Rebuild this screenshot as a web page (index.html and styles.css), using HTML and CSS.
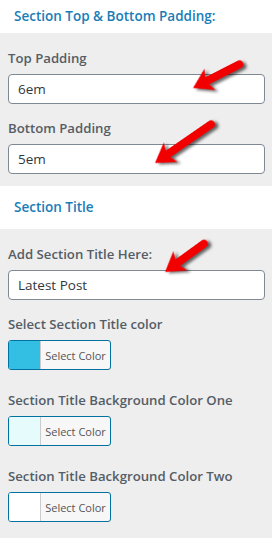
FILE: index.html
```html
<!DOCTYPE html>
<html lang="en">
<head>
  <meta charset="utf-8">
  <meta name="viewport" content="width=device-width, initial-scale=1.0">
  <title>Section Settings</title>
  <link rel="stylesheet" href="styles.css">
</head>
<body>
  <div class="section-head first">
    <h3>Section Top &amp; Bottom Padding:</h3>
  </div>
  <div class="panel">
    <div class="field">
      <label for="top-padding">Top Padding</label>
      <input type="text" id="top-padding" value="6em">
      <svg class="arrow arrow-top" width="56" height="26" viewBox="0 0 56 26">
        <path d="M0 13 L19 1 L16 9 L52 9 A4 4 0 0 1 52 17 L16 17 L19 25 Z" fill="#f20000"/>
      </svg>
    </div>
    <div class="field">
      <label for="bottom-padding">Bottom Padding</label>
      <input type="text" id="bottom-padding" value="5em">
      <svg class="arrow arrow-bottom" width="72" height="26" viewBox="0 0 72 26">
        <path d="M0 13 L19 1 L16 9 L68 9 A4 4 0 0 1 68 17 L16 17 L19 25 Z" fill="#f20000"/>
      </svg>
    </div>
  </div>

  <div class="section-head">
    <h3>Section Title</h3>
  </div>
  <div class="panel">
    <div class="field">
      <label for="section-title">Add Section Title Here:</label>
      <input type="text" id="section-title" value="Latest Post">
      <svg class="arrow arrow-title" width="52" height="26" viewBox="0 0 52 26">
        <path d="M0 13 L19 1 L16 9 L48 9 A4 4 0 0 1 48 17 L16 17 L19 25 Z" fill="#f20000"/>
      </svg>
    </div>
    <div class="field color-field">
      <label>Select Section Title color</label>
      <button type="button" class="color-btn"><span class="swatch swatch-blue"></span><span class="color-text">Select Color</span></button>
    </div>
    <div class="field color-field">
      <label>Section Title Background Color One</label>
      <button type="button" class="color-btn"><span class="swatch swatch-cyan"></span><span class="color-text">Select Color</span></button>
    </div>
    <div class="field color-field">
      <label>Section Title Background Color Two</label>
      <button type="button" class="color-btn"><span class="swatch swatch-white"></span><span class="color-text">Select Color</span></button>
    </div>
  </div>
</body>
</html>
```

FILE: styles.css
```css
body {
  margin: 0;
  background-color: #eeeeee;
  font-family: "Open Sans", "Noto Sans", Arial, sans-serif;
  color: #555d66;
}
.section-head {
  background-color: #ffffff;
  padding: 12px 14px 13px;
}
.section-head.first {
  padding: 7px 14px 8px;
}
.section-head h3 {
  margin: 0;
  font-size: 13.5px;
  line-height: 18px;
  font-weight: 600;
  color: #1a7db6;
}
.panel {
  padding: 16px 7px 12px 8px;
}
.field {
  position: relative;
  margin-bottom: 15px;
}
.field:last-child {
  margin-bottom: 0;
}
.color-field {
  margin-bottom: 21px;
}
.field label {
  display: block;
  font-size: 13.2px;
  line-height: 18px;
  font-weight: 600;
  margin-bottom: 7px;
}
.field input[type="text"] {
  display: block;
  box-sizing: border-box;
  width: 100%;
  height: 30px;
  margin: 0;
  padding: 0 9px;
  border: 1px solid #7e8993;
  border-radius: 4px;
  background-color: #ffffff;
  font-family: "Open Sans", "Noto Sans", Arial, sans-serif;
  font-size: 13.5px;
  color: #32373c;
}
.color-btn {
  display: flex;
  align-items: stretch;
  box-sizing: border-box;
  width: 103px;
  height: 30px;
  padding: 0;
  margin: 0;
  border: 1px solid #0071a1;
  border-radius: 3px;
  background-color: #f7f7f7;
  overflow: hidden;
  cursor: pointer;
}
.swatch {
  width: 31px;
  border-right: 1px solid #cccccc;
}
.swatch-blue {
  background-color: #33bfe4;
}
.swatch-cyan {
  background-color: #e6fbfc;
}
.swatch-white {
  background-color: #ffffff;
}
.color-text {
  flex: 1;
  display: flex;
  align-items: center;
  justify-content: center;
  font-family: "Open Sans", "Noto Sans", Arial, sans-serif;
  font-size: 11px;
  color: #555555;
}
.arrow {
  position: absolute;
  overflow: visible;
  transform-origin: 0 13px;
  filter: drop-shadow(2px 3px 1.5px rgba(0, 0, 0, 0.6));
}
.arrow-top {
  left: 185px;
  top: 26px;
  transform: rotate(-27deg);
}
.arrow-bottom {
  left: 147px;
  top: 31px;
  transform: rotate(-34.6deg);
}
.arrow-title {
  left: 157px;
  top: 14px;
  transform: rotate(-36deg);
}
```
